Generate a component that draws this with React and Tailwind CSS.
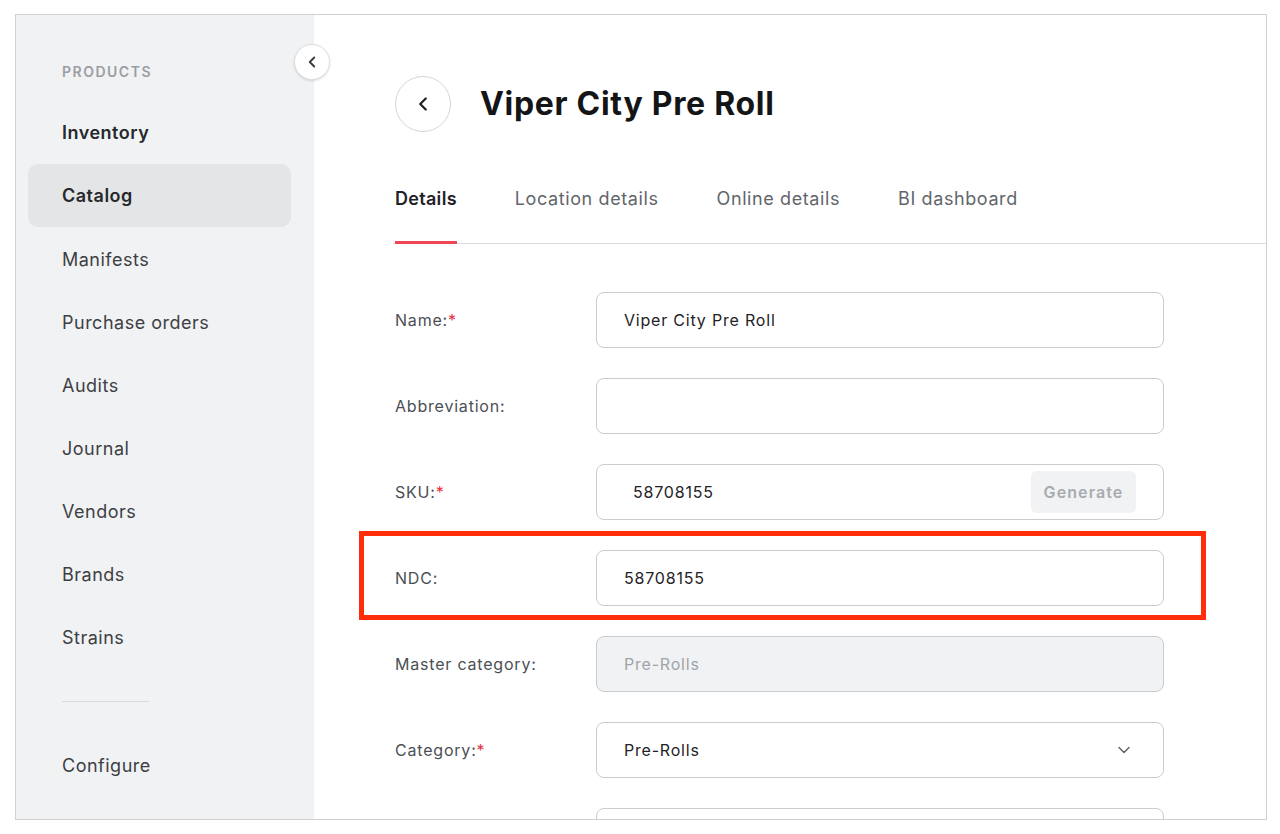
import { ChevronLeft, ChevronDown } from 'lucide-react';

const navItems = [
    { label: 'Inventory', bold: true },
    { label: 'Catalog', bold: true, active: true },
    { label: 'Manifests' },
    { label: 'Purchase orders' },
    { label: 'Audits' },
    { label: 'Journal' },
    { label: 'Vendors' },
    { label: 'Brands' },
    { label: 'Strains' },
];

const tabs = ['Details', 'Location details', 'Online details', 'BI dashboard'];

function Label({ text, required }) {
    return (
        <div className="w-[201px] shrink-0 text-[16px] tracking-[0.8px] text-[#4b4f54]">
            {text}
            {required && <span className="text-[#e5303f]">*</span>}
        </div>
    );
}

function Field({ label, required, value, children, disabled, highlight }) {
    return (
        <div className="relative flex items-center">
            <Label text={label} required={required} />
            <div
                className={`flex h-[56px] w-[568px] items-center rounded-[8px] border border-[#c9cdd1] text-[16px] tracking-[0.8px] ${
                    disabled ? 'bg-[#f1f2f4] text-[#a0a4a8]' : 'bg-white text-[#1f2226]'
                }`}
            >
                {children || <span className="pl-[27px]">{value}</span>}
            </div>
            {highlight && (
                <div className="pointer-events-none absolute left-[-36px] top-[-19px] h-[89px] w-[847px] border-[5px] border-[#ff2d0a]" />
            )}
        </div>
    );
}

export default function App() {
    return (
        <div className="min-h-screen bg-white pl-[15px] pt-[14px] font-['Inter',sans-serif]">
            <div className="relative flex h-[806px] w-[1252px] overflow-hidden border border-[#d0d0d0]">
                {/* Sidebar */}
                <aside className="w-[298px] shrink-0 bg-[#f1f2f4] pl-[12px] pr-[23px] pt-[48px]">
                    <div className="mb-[20px] pl-[34px] text-[14px] font-semibold leading-[18px] tracking-[1.5px] text-[#9a9ea3]">
                        PRODUCTS
                    </div>
                    {navItems.map((item) => (
                        <div
                            key={item.label}
                            className={`flex h-[63px] items-center rounded-[10px] pl-[34px] text-[18px] tracking-[0.5px] ${
                                item.bold ? 'font-semibold text-[#26282b]' : 'text-[#3d4043]'
                            } ${item.active ? 'h-[62px] mb-[1px] bg-[#e3e5e7]' : ''}`}
                        >
                            {item.label}
                        </div>
                    ))}
                    <div className="ml-[34px] mt-[32px] h-px w-[87px] bg-[#d9dbde]" />
                    <div className="mt-[32px] flex h-[63px] items-center pl-[34px] text-[18px] tracking-[0.5px] text-[#3d4043]">
                        Configure
                    </div>
                </aside>

                {/* Collapse button */}
                <button className="absolute left-[278px] top-[29px] flex h-[36px] w-[36px] items-center justify-center rounded-full border border-[#dcdfe2] bg-white shadow-sm">
                    <ChevronLeft size={18} strokeWidth={2.5} className="text-[#3a3d40]" />
                </button>

                {/* Main */}
                <main className="flex-1 pl-[79px] pt-[61px]">
                    <div className="flex items-center pl-[2px]">
                        <button className="flex h-[56px] w-[56px] items-center justify-center rounded-full border border-[#d3d6d9] bg-white">
                            <ChevronLeft size={22} strokeWidth={2.5} className="text-[#1f2226]" />
                        </button>
                        <h1 className="ml-[29px] text-[32px] font-bold tracking-[0.7px] text-[#141517]">
                            Viper City Pre Roll
                        </h1>
                    </div>

                    <div className="mt-[56px] flex gap-[58px] border-b border-[#d9dbde] pl-[2px]">
                        {tabs.map((tab, i) => (
                            <div
                                key={tab}
                                className={`-mb-px pb-[31px] text-[18px] leading-[22px] ${
                                    i === 0
                                        ? 'border-b-[3px] border-[#ef4655] font-semibold tracking-[0.3px] text-[#1f2226]'
                                        : 'border-b-[3px] border-transparent tracking-[0.6px] text-[#62666b]'
                                }`}
                            >
                                {tab}
                            </div>
                        ))}
                    </div>

                    <div className="mt-[48px] flex flex-col gap-[30px] pl-[2px]">
                        <Field label="Name:" required value="Viper City Pre Roll" />
                        <Field label="Abbreviation:" value="" />
                        <Field label="SKU:" required>
                            <div className="flex w-full items-center justify-between pl-[36px] pr-[27px]">
                                <span>58708155</span>
                                <span className="flex h-[42px] w-[105px] items-center justify-center rounded-[6px] bg-[#f1f2f4] text-[16px] font-semibold tracking-[1.1px] text-[#a7abaf]">
                                    Generate
                                </span>
                            </div>
                        </Field>
                        <Field label="NDC:" value="58708155" highlight />
                        <Field label="Master category:" value="Pre-Rolls" disabled />
                        <Field label="Category:" required>
                            <div className="flex w-full items-center justify-between pl-[27px] pr-[29px]">
                                <span>Pre-Rolls</span>
                                <ChevronDown size={20} strokeWidth={1.75} className="text-[#5f6368]" />
                            </div>
                        </Field>
                        <Field label="" value="" />
                    </div>
                </main>
            </div>
        </div>
    );
}
